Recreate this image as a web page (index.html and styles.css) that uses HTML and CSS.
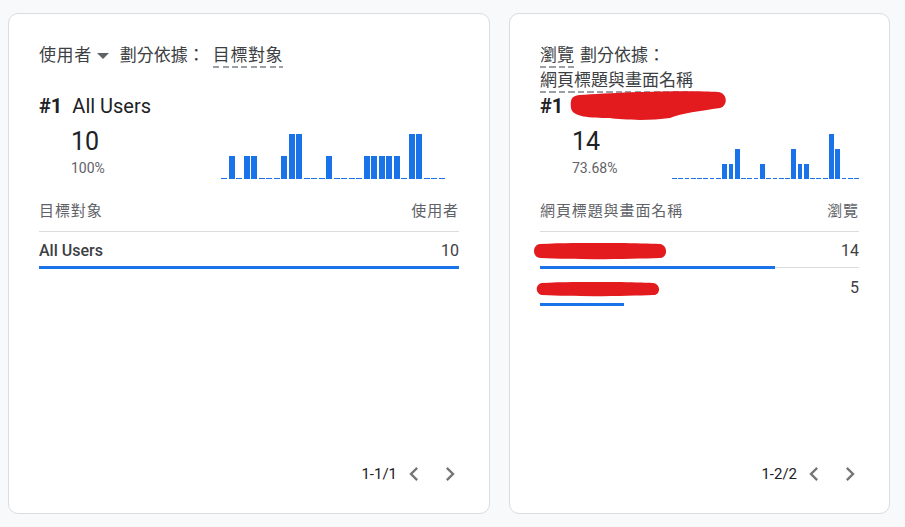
FILE: index.html
```html
<!DOCTYPE html>
<html lang="zh-Hant">
<head>
<meta charset="utf-8">
<title>Cards</title>
<link rel="stylesheet" href="styles.css">
</head>
<body>
<div class="board">
  <section class="card card-wide">
    <div class="card-head">
      <div class="head-line">
        <span class="metric">使用者</span>
        <svg class="drop" width="12" height="6" viewBox="0 0 12 6"><path d="M0 0h12L6 6z" fill="#5f6368"/></svg>
        <span class="by">劃分依據：</span>
        <span class="dim dim-gap">目標對象</span>
      </div>
    </div>
    <div class="top-item"><span class="rank">#1</span><span class="top-name">All Users</span></div>
    <div class="stats">
      <div class="stat-nums">
        <div class="big">10</div>
        <div class="pct">100%</div>
      </div>
      <div class="spark spark-wide">
        <div class="bar zero"></div><div class="bar" style="height:23px"></div><div class="bar zero"></div><div class="bar" style="height:23px"></div><div class="bar" style="height:23px"></div><div class="bar zero"></div><div class="bar zero"></div><div class="bar zero"></div><div class="bar" style="height:23px"></div><div class="bar" style="height:45px"></div><div class="bar" style="height:45px"></div><div class="bar zero"></div><div class="bar zero"></div><div class="bar zero"></div><div class="bar" style="height:23px"></div><div class="bar zero"></div><div class="bar zero"></div><div class="bar zero"></div><div class="bar zero"></div><div class="bar" style="height:23px"></div><div class="bar" style="height:23px"></div><div class="bar" style="height:23px"></div><div class="bar" style="height:23px"></div><div class="bar" style="height:23px"></div><div class="bar zero"></div><div class="bar" style="height:45px"></div><div class="bar" style="height:45px"></div><div class="bar zero"></div><div class="bar zero"></div><div class="bar zero"></div>
      </div>
    </div>
    <div class="table">
      <div class="thead"><span>目標對象</span><span>使用者</span></div>
      <div class="row last">
        <div class="row-text"><span class="row-name">All Users</span><span class="row-val">10</span></div>
        <div class="track"><div class="fill" style="width:100%"></div></div>
      </div>
    </div>
    <div class="pager">
      <span class="pager-text">1-1/1</span>
      <svg class="chev chev-l" width="28" height="28" viewBox="0 0 24 24"><path d="M15.41 7.41L14 6l-6 6 6 6 1.41-1.41L10.83 12z" fill="#757575"/></svg>
      <svg class="chev" width="28" height="28" viewBox="0 0 24 24"><path d="M10 6L8.59 7.41 13.17 12l-4.58 4.59L10 18l6-6z" fill="#757575"/></svg>
    </div>
  </section>

  <section class="card card-narrow">
    <div class="card-head">
      <div class="head-line">
        <span class="dim">瀏覽</span>
        <span class="by by-gap">劃分依據：</span>
      </div>
      <div class="head-line">
        <span class="dim">網頁標題與畫面名稱</span>
      </div>
    </div>
    <div class="top-item">
      <span class="rank">#1</span>
      <svg class="redact redact-title" width="158" height="30" viewBox="0 0 158 30"><path d="M9 4 C50 1 120 -1 148 1 C158 2 158 15 150 17 C130 20 112 22 100 27 C80 30 52 29 40 27 C20 27 2 26 1 17 C0 8 2 5 9 4 Z" fill="#e31b1f"/></svg>
    </div>
    <div class="stats">
      <div class="stat-nums">
        <div class="big">14</div>
        <div class="pct">73.68%</div>
      </div>
      <div class="spark spark-narrow">
        <div class="bar zero"></div><div class="bar zero"></div><div class="bar zero"></div><div class="bar zero"></div><div class="bar zero"></div><div class="bar zero"></div><div class="bar zero"></div><div class="bar zero"></div><div class="bar" style="height:15px"></div><div class="bar" style="height:15px"></div><div class="bar" style="height:30px"></div><div class="bar zero"></div><div class="bar zero"></div><div class="bar zero"></div><div class="bar" style="height:15px"></div><div class="bar zero"></div><div class="bar zero"></div><div class="bar zero"></div><div class="bar zero"></div><div class="bar" style="height:30px"></div><div class="bar" style="height:15px"></div><div class="bar" style="height:15px"></div><div class="bar zero"></div><div class="bar zero"></div><div class="bar zero"></div><div class="bar" style="height:45px"></div><div class="bar" style="height:30px"></div><div class="bar zero"></div><div class="bar zero"></div><div class="bar zero"></div>
      </div>
    </div>
    <div class="table">
      <div class="thead"><span>網頁標題與畫面名稱</span><span>瀏覽</span></div>
      <div class="row">
        <div class="row-text">
          <svg class="redact redact-row1" width="136" height="17" viewBox="0 0 136 17"><path d="M8 1 C50 -1 100 0 128 1 C136 2 136 15 128 15 C100 16 50 17 8 15 C0 14 0 2 8 1 Z" fill="#e31b1f"/></svg>
          <span class="row-val">14</span>
        </div>
        <div class="track"><div class="fill" style="width:73.68%"></div></div>
      </div>
      <div class="row last">
        <div class="row-text">
          <svg class="redact redact-row2" width="125" height="15" viewBox="0 0 125 15"><path d="M7 1 C45 -1 95 0 118 1 C126 2 126 13 118 13 C95 14 45 15 7 13 C0 12 0 2 7 1 Z" fill="#e31b1f"/></svg>
          <span class="row-val">5</span>
        </div>
        <div class="track"><div class="fill" style="width:26.32%"></div></div>
      </div>
    </div>
    <div class="pager">
      <span class="pager-text">1-2/2</span>
      <svg class="chev chev-l" width="28" height="28" viewBox="0 0 24 24"><path d="M15.41 7.41L14 6l-6 6 6 6 1.41-1.41L10.83 12z" fill="#757575"/></svg>
      <svg class="chev" width="28" height="28" viewBox="0 0 24 24"><path d="M10 6L8.59 7.41 13.17 12l-4.58 4.59L10 18l6-6z" fill="#757575"/></svg>
    </div>
  </section>
</div>
</body>
</html>
```

FILE: styles.css
```css
* { box-sizing: border-box; }

html, body {
  margin: 0;
  padding: 0;
  background: #f8f9fa;
  font-family: Roboto, "Noto Sans CJK TC", sans-serif;
  color: #3c4043;
}

.board {
  display: flex;
  gap: 19px;
  padding: 13px 0 0 8px;
}

.card {
  height: 501px;
  background: #fff;
  border: 1px solid #dadce0;
  border-radius: 10px;
  padding: 29px 30px 25px;
  display: flex;
  flex-direction: column;
}

.card-wide { width: 482px; }
.card-narrow { width: 381px; }

.card-head {
  height: 50px;
  font-size: 17px;
  line-height: 25px;
  color: #3c4043;
}

.head-line {
  display: flex;
  align-items: center;
  height: 25px;
}

.metric { letter-spacing: 0.6px; }

.drop {
  margin-left: 5px;
  margin-right: 11px;
}

.dim {
  display: inline-block;
  height: 25px;
  background-image: repeating-linear-gradient(to right, #9aa0a6 0 6px, transparent 6px 9.5px);
  background-size: 100% 2px;
  background-position: left bottom;
  background-repeat: no-repeat;
}

.dim-gap { margin-left: 8px; letter-spacing: 0.6px; }
.by-gap { margin-left: 6px; }

.top-item {
  display: flex;
  align-items: center;
  height: 26px;
  font-size: 20px;
  color: #202124;
}

.rank {
  font-weight: 700;
  margin-right: 10px;
}

.top-name { font-weight: 400; }

.redact-title {
  margin: -2px 0 -2px -3px;
}

.stats {
  display: flex;
  align-items: flex-end;
  margin-top: 8px;
}

.stat-nums {
  margin-left: 32px;
}

.big {
  font-size: 25px;
  line-height: 30px;
  color: #202124;
}

.pct {
  font-size: 14px;
  line-height: 22px;
  color: #5f6368;
}

.spark {
  margin-left: auto;
  height: 45px;
  display: flex;
  align-items: flex-end;
  gap: 1.5px;
}

.spark-wide { width: 224px; margin-right: 14px; }
.spark-narrow { width: 187px; }

.bar {
  flex: 1;
  background: #1a73e8;
}

.bar.zero { height: 1px; }

.table { margin-top: 22px; }

.thead {
  display: flex;
  justify-content: space-between;
  font-size: 15px;
  line-height: 20px;
  letter-spacing: 0.9px;
  color: #5f6368;
  padding-bottom: 10px;
  border-bottom: 1px solid #dadce0;
}

.row {
  padding-top: 8px;
}

.row-text {
  display: flex;
  align-items: center;
  justify-content: space-between;
  height: 20px;
  font-size: 16px;
  color: #3c4043;
}

.row-name { font-weight: 500; }
.row-val { margin-left: auto; }

.redact-row1 { margin-left: -8px; margin-top: 2px; }
.redact-row2 { margin-left: -5px; margin-top: 4px; }

.track {
  height: 3px;
  margin-top: 6px;
  background: linear-gradient(#dadce0, #dadce0) left center / 100% 1px no-repeat;
}

.row.last .track { background: none; }

.fill {
  height: 3px;
  background: #1a73e8;
}

.pager {
  margin-top: auto;
  margin-right: -5px;
  display: flex;
  align-items: center;
  justify-content: flex-end;
  height: 28px;
}

.pager-text {
  font-size: 15px;
  color: #202124;
  margin-right: 3px;
}

.chev-l { margin-right: 8px; }
```
